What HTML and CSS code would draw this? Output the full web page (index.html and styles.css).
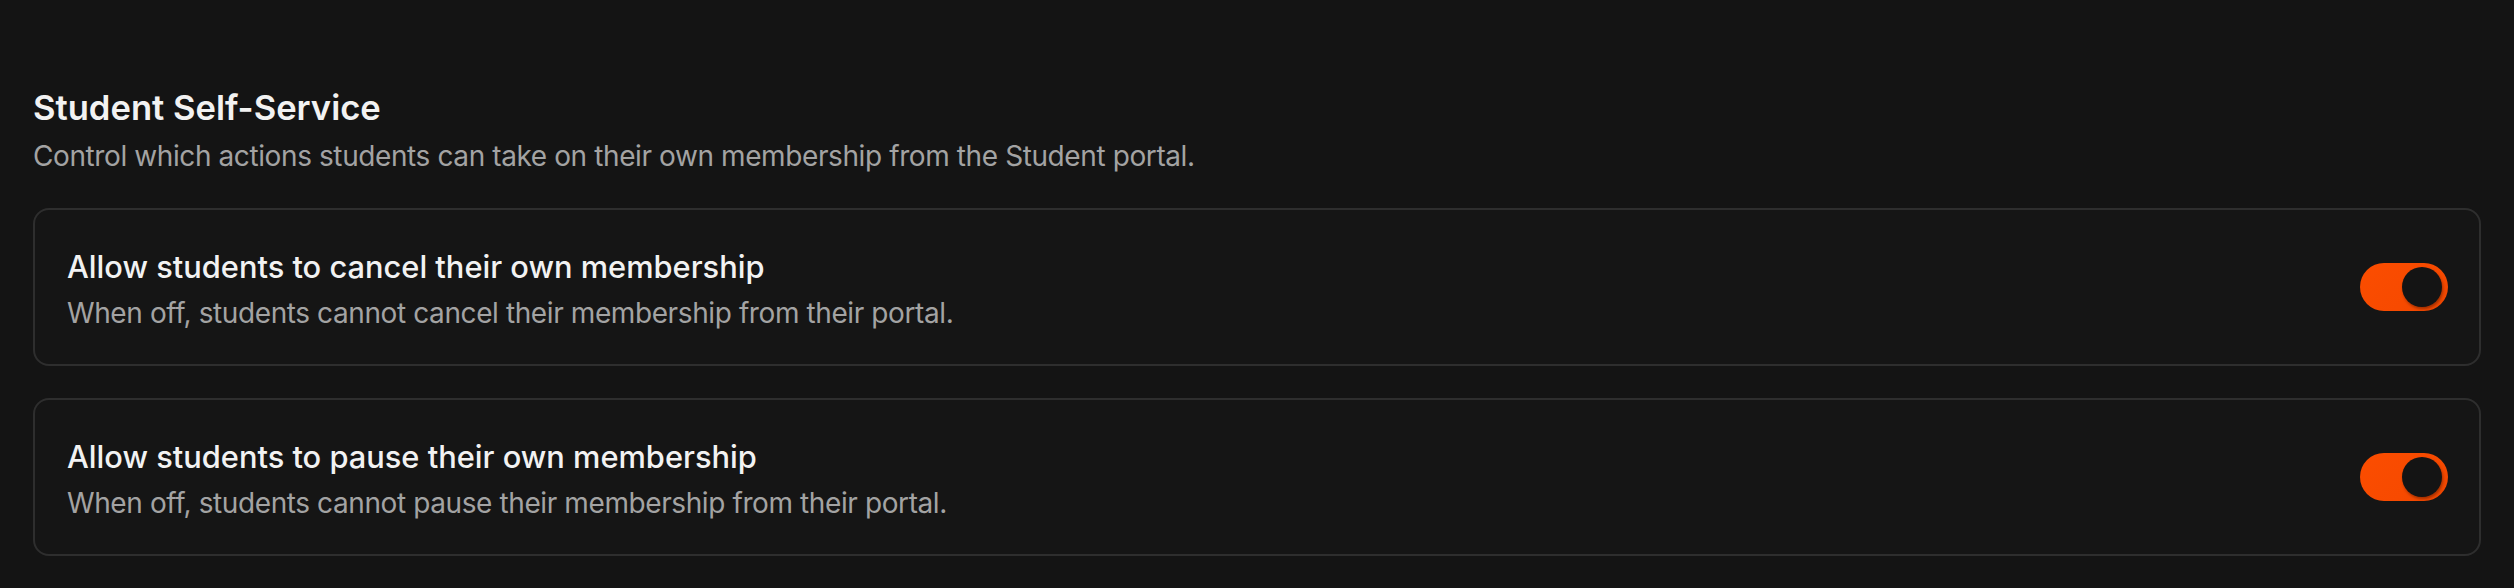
FILE: index.html
```html
<!DOCTYPE html>
<html lang="en">
<head>
<meta charset="utf-8">
<title>Student Self-Service</title>
<link rel="stylesheet" href="styles.css">
</head>
<body>
<main class="page">
  <section class="section">
    <h2 class="section-title">Student Self-Service</h2>
    <p class="section-desc">Control which actions students can take on their own membership from the Student portal.</p>
    <div class="cards">
      <div class="card">
        <div class="card-text">
          <div class="card-title">Allow students to cancel their own membership</div>
          <div class="card-desc">When off, students cannot cancel their membership from their portal.</div>
        </div>
        <button class="toggle on" type="button" aria-pressed="true"><span class="knob"></span></button>
      </div>
      <div class="card">
        <div class="card-text">
          <div class="card-title">Allow students to pause their own membership</div>
          <div class="card-desc">When off, students cannot pause their membership from their portal.</div>
        </div>
        <button class="toggle on" type="button" aria-pressed="true"><span class="knob"></span></button>
      </div>
    </div>
  </section>
</main>
</body>
</html>
```
FILE: styles.css
```css
* { box-sizing: border-box; }
html, body {
  margin: 0;
  background: #141414;
  font-family: Inter, "Noto Sans", sans-serif;
}
.page {
  padding: 87px 33px 0;
}
.section-title {
  margin: 0;
  font-size: 34.6px;
  line-height: 40px;
  font-weight: 600;
  color: #f2f2f2;
}
.section-desc {
  margin: 9px 0 0;
  font-size: 28px;
  line-height: 40px;
  font-weight: 400;
  letter-spacing: -0.4px;
  color: #a3a3a3;
}
.cards {
  margin-top: 32px;
  display: flex;
  flex-direction: column;
  gap: 32px;
}
.card {
  display: flex;
  align-items: center;
  justify-content: space-between;
  border: 2px solid #2e2e2e;
  border-radius: 16px;
  padding: 37px 31px 31px 32px;
  background: #151515;
}
.card-title {
  font-size: 30.8px;
  line-height: 40px;
  font-weight: 500;
  color: #f2f2f2;
}
.card-desc {
  margin-top: 6px;
  font-size: 28px;
  line-height: 40px;
  letter-spacing: -0.4px;
  color: #a3a3a3;
}
.toggle {
  flex: none;
  width: 88px;
  height: 48px;
  margin-top: -6px;
  padding: 0;
  border: none;
  border-radius: 24px;
  background: linear-gradient(135deg, #fb4d00 0%, #f74a00 60%, #ef4700 100%);
  position: relative;
  cursor: pointer;
}
.knob {
  position: absolute;
  top: 4px;
  left: 42px;
  width: 40px;
  height: 40px;
  border-radius: 50%;
  background: #141414;
  box-shadow: 1px 2px 3px rgba(0, 0, 0, 0.35);
}
```
